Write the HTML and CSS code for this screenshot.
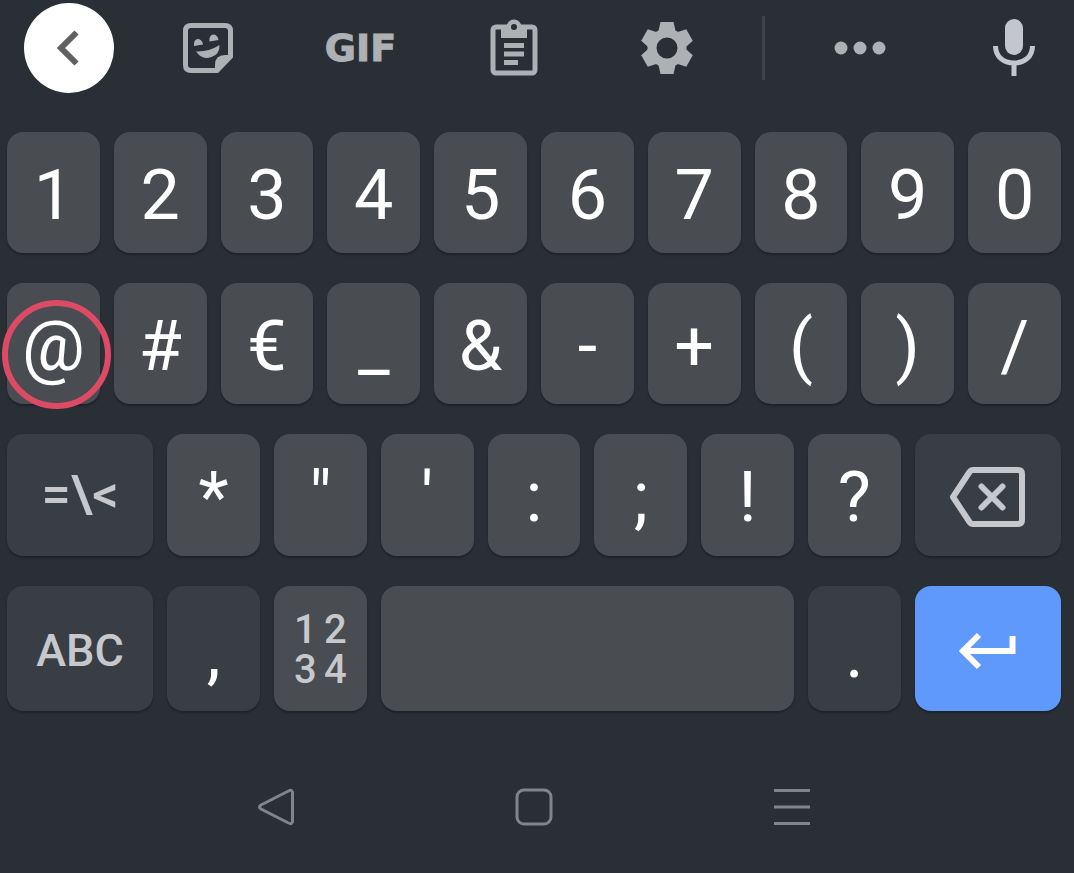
FILE: index.html
```html
<!DOCTYPE html>
<html lang="en">
<head>
  <meta charset="UTF-8">
  <meta name="viewport" content="width=device-width, initial-scale=1.0">
  <title>Keyboard</title>
  <link rel="stylesheet" href="styles.css">
</head>
<body>

  <div class="toolbar">
    <button class="tool back" aria-label="Back">
      <svg width="90" height="90" viewBox="0 0 90 90"><path d="M52.500 29.500L37 45L52.500 60.500" fill="none" stroke="#5f6062" stroke-width="6"/></svg>
    </button>
    <button class="tool" aria-label="Stickers">
      <svg width="50" height="50" viewBox="0 0 50 50">
        <path d="M8 2.500H42Q47.500 2.500 47.500 8V33.500L34 47.500H8Q2.500 47.500 2.500 42V8Q2.500 2.500 8 2.500Z" fill="none" stroke="currentColor" stroke-width="5"/>
        <path d="M32 48V42Q32 32 42 32H48Z" fill="currentColor"/>
        <path d="M11 23Q10.500 16.500 14.500 16Q19 16 20 21.500ZM26.500 18.500Q26 12 30 11.500Q34.500 11.500 35.500 17Z" fill="currentColor"/>
        <path d="M13 28.500Q26 29 36.500 22Q37 31 28.500 34Q19 37.500 13 28.500Z" fill="currentColor"/>
      </svg>
    </button>
    <button class="tool gif">GIF</button>
    <button class="tool" aria-label="Clipboard">
      <svg width="48" height="58" viewBox="0 0 48 58">
        <rect x="3" y="8" width="42" height="46" rx="3" fill="none" stroke="currentColor" stroke-width="5"/>
        <path d="M11 8H16.500A7.500 7.500 0 0 1 31.500 8H37V19H11Z" fill="currentColor"/>
        <circle cx="24" cy="8" r="3" fill="#2a2f36"/>
        <path d="M14 26.500H34M14 35H34M14 43.500H28" stroke="currentColor" stroke-width="5"/>
      </svg>
    </button>
    <button class="tool" aria-label="Settings">
      <svg width="52" height="52" viewBox="-26 -26 52 52" fill="currentColor">
        <circle r="15" fill="none" stroke="currentColor" stroke-width="9"/>
        <path id="tooth" d="M-6.500 -26H6.500L9 -15H-9Z"/>
        <use href="#tooth" transform="rotate(60)"/>
        <use href="#tooth" transform="rotate(120)"/>
        <use href="#tooth" transform="rotate(180)"/>
        <use href="#tooth" transform="rotate(240)"/>
        <use href="#tooth" transform="rotate(300)"/>
      </svg>
    </button>
    <span class="divider"></span>
    <button class="tool" aria-label="More">
      <svg width="52" height="14" viewBox="0 0 52 14" fill="currentColor"><circle cx="7" cy="7" r="6.500"/><circle cx="26" cy="7" r="6.500"/><circle cx="45" cy="7" r="6.500"/></svg>
    </button>
    <button class="tool mic" aria-label="Voice input">
      <svg width="42" height="58" viewBox="0 0 42 58">
        <rect x="12" y="0" width="18" height="36" rx="9" fill="currentColor"/>
        <path d="M2.500 27C2.500 38 11 44 21 44S39.500 38 39.500 27M21 44V57" fill="none" stroke="currentColor" stroke-width="5"/>
      </svg>
    </button>
  </div>

  <div class="keyboard">
    <button class="key">1</button>
    <button class="key">2</button>
    <button class="key">3</button>
    <button class="key">4</button>
    <button class="key">5</button>
    <button class="key">6</button>
    <button class="key">7</button>
    <button class="key">8</button>
    <button class="key">9</button>
    <button class="key">0</button>

    <button class="key marked">@</button>
    <button class="key">#</button>
    <button class="key">€</button>
    <button class="key">_</button>
    <button class="key">&amp;</button>
    <button class="key">-</button>
    <button class="key">+</button>
    <button class="key">(</button>
    <button class="key">)</button>
    <button class="key">/</button>

    <button class="key wide dark label symbols">=\&lt;</button>
    <button class="key">*</button>
    <button class="key">"</button>
    <button class="key">'</button>
    <button class="key">:</button>
    <button class="key">;</button>
    <button class="key">!</button>
    <button class="key">?</button>
    <button class="key wide dark label" aria-label="Delete">
      <svg width="76" height="60" viewBox="0 0 76 60" fill="none" stroke="currentColor" stroke-width="6" stroke-linejoin="round">
        <path d="M23 3H68Q72 3 72 7V53Q72 57 68 57H23Q21 57 19.500 55L3 30L19.500 5Q21 3 23 3Z"/>
        <path d="M31.500 19.500L52.500 40.500M52.500 19.500L31.500 40.500" stroke-linecap="round"/>
      </svg>
    </button>

    <button class="key wide dark label">ABC</button>
    <button class="key dark low">,</button>
    <button class="key numpad"><span>1</span><span>2</span><span>3</span><span>4</span></button>
    <button class="key space" aria-label="Space"></button>
    <button class="key dark low">.</button>
    <button class="key wide enter" aria-label="Enter">
      <svg width="60" height="38" viewBox="0 0 60 38" fill="none" stroke="currentColor" stroke-width="6"><path d="M54.500 4V19H6M21 3L5 19L21 35"/></svg>
    </button>
  </div>

  <div class="navbar">
    <button class="nav" aria-label="Back">
      <svg width="38" height="38" viewBox="0 0 38 38"><path d="M31.500 3Q35.500 1 35.500 5V33Q35.500 37 31.500 35L4 21Q1 19 4 17Z"/></svg>
    </button>
    <button class="nav" aria-label="Home">
      <svg width="38" height="38" viewBox="0 0 38 38"><rect x="2" y="2" width="34" height="34" rx="7"/></svg>
    </button>
    <button class="nav" aria-label="Recent apps">
      <svg width="38" height="38" viewBox="0 0 38 38"><path d="M1 2.500H37M1 19H37M1 35.500H37"/></svg>
    </button>
  </div>

</body>
</html>
```

FILE: styles.css
```css
*,
*::after {
  box-sizing: border-box;
}
body {
  margin: 0;
  min-height: 100vh;
  background: #2a2f36;
  font-family: Roboto, Arial, sans-serif;
}
button {
  padding: 0;
  border: none;
  background: none;
  font-family: inherit;
  cursor: pointer;
}
svg {
  display: block;
}

/* top bar */
.toolbar {
  display: grid;
  grid-template-columns: 131px repeat(4, 1fr) 40px 1fr 138px;
  align-items: center;
  height: 96px;
}
.tool {
  display: flex;
  justify-content: center;
  align-items: center;
  color: #aeb1b4;
}
.back {
  width: 90px;
  height: 90px;
  margin-left: 24px;
  border-radius: 50%;
  background: #fff;
}
.gif {
  font-family: "DejaVu Sans", sans-serif;
  font-size: 38px;
  font-weight: bold;
  -webkit-text-stroke: 1px #aeb1b4;
}
.divider {
  justify-self: center;
  width: 3px;
  height: 64px;
  background: #3f4348;
}
.mic {
  justify-content: flex-end;
  padding-right: 39px;
  color: #c3c6ca;
}

/* a normal key takes two of the twenty columns */
.keyboard {
  display: grid;
  grid-template-columns: repeat(20, 1fr);
  grid-template-rows: 121px 121px 122px 125px;
  gap: 30px 14px;
  padding: 36px 13px 0 7px;
}
.key {
  grid-column: span 2;
  display: flex;
  justify-content: center;
  align-items: center;
  padding-top: 4px;
  border-radius: 16px;
  background: #494c50;
  box-shadow: 0 2px 2px #1f2328;
  color: #fff;
  font-size: 70px;
  line-height: 80px;
}
.wide {
  grid-column: span 3;
}
.space {
  grid-column: span 8;
}
.dark {
  background: #393e44;
}
.label {
  color: #c6c8cb;
  font-size: 45px;
  font-weight: 500;
}
.symbols {
  font-size: 52px;
  padding-top: 0;
}
.low {
  padding-top: 8px;
}
.numpad {
  display: grid;
  grid-template-columns: 30px 30px;
  align-content: center;
  padding-top: 2px;
  color: #c6c8cb;
  font-size: 40px;
  font-weight: 500;
  line-height: 40px;
}
.enter {
  background: #5f99fb;
}
.marked {
  position: relative;
}
.marked::after {
  content: "";
  position: absolute;
  top: 17px;
  left: -5px;
  width: 109px;
  height: 109px;
  border: 6px solid #dc4a66;
  border-radius: 50%;
  z-index: 1;
}

/* system buttons */
.navbar {
  display: flex;
  justify-content: center;
  gap: 220px;
  padding: 77px 13px 47px 7px;
}
.nav svg {
  fill: none;
  stroke: #80858a;
  stroke-width: 3;
}
```
